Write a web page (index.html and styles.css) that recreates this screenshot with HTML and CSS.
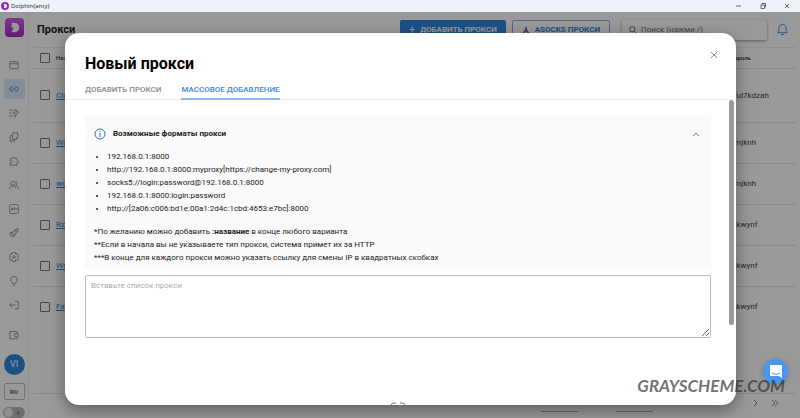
FILE: index.html
```html
<!DOCTYPE html>
<html lang="ru">
<head>
    <meta charset="UTF-8">
    <meta name="viewport" content="width=device-width, initial-scale=1.0">
    <title>Dolphin{anty}</title>
    <link rel="stylesheet" href="styles.css">
</head>
<body>
    <header class="titlebar">
        <svg class="titlebar-logo" viewBox="0 0 20 20"><circle cx="10" cy="10" r="10" fill="#9c27b0"/><path d="M7 5h3a5 5 0 0 1 0 10H7l2-5z" fill="#fff"/></svg>
        <span class="titlebar-name">Dolphin{anty}</span>
        <div class="window-controls">
            <button type="button" aria-label="Свернуть"><svg viewBox="0 0 8 8"><path d="M1 4h5"/></svg></button>
            <button type="button" aria-label="Развернуть"><svg viewBox="0 0 8 8"><path d="M2 3h3.500v3.500H2zM3 3V1.500h3.500V5H5.500"/></svg></button>
            <button type="button" aria-label="Закрыть окно"><svg viewBox="0 0 8 8"><path d="M2 2l4 4M6 2L2 6"/></svg></button>
        </div>
    </header>

    <div class="app">
        <nav class="sidebar">
            <a class="logo" href="#" aria-label="Dolphin"><svg viewBox="0 0 20 20"><path d="M7 5h2c4 0 6 2 6 5s-2 5-6 5H7c0-2 2-3 2-4 0-1-2-1-3-2 2 0 1-2 1-4z" fill="#fff"/></svg></a>
            <a class="nav-item" href="#" aria-label="Профили"><svg viewBox="0 0 24 24"><rect x="2" y="4" width="20" height="17" rx="2"/><path d="M2 9h20"/></svg></a>
            <a class="nav-item active" href="#" aria-label="Прокси"><svg viewBox="0 0 24 24"><path d="M10 17H7a5 5 0 0 1 0-10h3M14 7h3a5 5 0 0 1 0 10h-3M8 12h8"/></svg></a>
            <a class="nav-item" href="#" aria-label="Автоматизация"><svg viewBox="0 0 24 24"><path d="M17 2l-7 10h5l-1 10 9-13h-6V2M1 5h9M1 12h5M1 19h9"/></svg></a>
            <a class="nav-item" href="#" aria-label="Куки"><svg viewBox="0 0 24 24"><path d="M9 2h12v12l-4 4H9zM9 7L3 9v13h10v-4M17 18v-4h4"/></svg></a>
            <a class="nav-item" href="#" aria-label="Расширения"><svg viewBox="0 0 24 24"><path d="M3 6h6c-1-5 6-5 5 0h5v5c5-1 5 6 0 5v6H3v-6c5 1 5-6 0-5z"/></svg></a>
            <a class="nav-item" href="#" aria-label="Пользователи"><svg viewBox="0 0 24 24"><circle cx="9" cy="8" r="5"/><path d="M1 21c1-9 15-9 16 0M15 3c6 0 6 8 1 10 4 0 6 3 7 8"/></svg></a>
            <a class="nav-item" href="#" aria-label="API"><svg viewBox="0 0 24 24"><rect x="1" y="1" width="22" height="22" rx="5"/><path d="M5 15l2-6 2 6M6 13h2M12 15V9h2q2 2 0 3h-2M19 9v6"/></svg></a>
            <a class="nav-item" href="#" aria-label="Сценарии"><svg viewBox="0 0 24 24"><path d="M8 13C11 5 15 2 22 2c0 7-3 11-11 14zM9 10H5l-3 5 5-1M14 15v4l-5 3 1-5M3 21l4-4"/><circle cx="16" cy="8" r="2"/></svg></a>
            <a class="nav-item" href="#" aria-label="Настройки"><svg viewBox="0 0 24 24"><path d="M9 1h6l1 4 4-1 3 5-3 3 3 3-3 5-4-1-1 4H9l-1-4-4 1-3-5 3-3-3-3 3-5 4 1z"/><circle cx="12" cy="12" r="3"/></svg></a>
            <a class="nav-item" href="#" aria-label="Подсказки"><svg viewBox="0 0 24 24"><path d="M9 18c0-3-5-4-5-9a8 8 0 0 1 16 0c0 5-5 6-5 9zM9 22h6"/></svg></a>
            <a class="nav-item" href="#" aria-label="Выйти"><svg viewBox="0 0 24 24"><path d="M14 3h8v18h-8M16 12H2M7 7l-5 5 5 5"/></svg></a>
            <a class="nav-item wallet" href="#" aria-label="Баланс"><svg viewBox="0 0 24 24"><path d="M20 8V4H2v17h18v-4M14 9h8v7h-8q-4-3 0-7z"/><path d="M16 12h1"/></svg></a>
            <a class="avatar" href="#">VI</a>
            <button class="lang" type="button">RU</button>
            <label class="theme"><input type="checkbox" aria-label="Тёмная тема"><span class="knob"></span><svg viewBox="0 0 12 12"><circle cx="6" cy="6" r="2"/><path d="M6 1v10M1 6h10M3 3l6 6M9 3L3 9"/></svg></label>
        </nav>

        <main class="page">
            <div class="toolbar">
                <h1 class="page-title">Прокси</h1>
                <button class="btn btn-primary" type="button"><span class="plus">+</span>Добавить прокси</button>
                <button class="btn btn-outline" type="button"><svg viewBox="0 0 10 10"><path d="M5 1l1 4 3 4-4-2-4 2 3-4z"/></svg>Asocks прокси</button>
                <label class="search"><svg viewBox="0 0 12 12"><circle cx="5" cy="5" r="4"/><path d="M8 8l3 3"/></svg><input type="search" placeholder="Поиск (нажми /)" aria-label="Поиск"></label>
                <button class="bell" type="button" aria-label="Уведомления"><svg viewBox="0 0 12 14"><path d="M1 10.500c1-1 1-2 1-4.500 0-6 8-6 8 0 0 2.500 0 3.500 1 4.500zM4.500 12.500h3"/></svg></button>
            </div>
            <table class="proxies">
                <thead>
                    <tr><th class="check"><input type="checkbox" aria-label="Выбрать все"></th><th>Название</th><th class="login">Пароль</th></tr>
                </thead>
                <tbody>
                    <tr class="tall"><td class="check"><input type="checkbox" aria-label="Clu"></td><td><a href="#">Clu</a></td><td class="login">zful7kdzah</td></tr>
                    <tr><td class="check"><input type="checkbox" aria-label="Wa"></td><td><a href="#">Wa</a></td><td class="login">amjknh</td></tr>
                    <tr><td class="check"><input type="checkbox" aria-label="wc"></td><td><a href="#">wc</a></td><td class="login">amjknh</td></tr>
                    <tr><td class="check"><input type="checkbox" aria-label="Rz"></td><td><a href="#">Rz</a></td><td class="login">lqkwynf</td></tr>
                    <tr><td class="check"><input type="checkbox" aria-label="Wa 2"></td><td><a href="#">Wa</a></td><td class="login">lqkwynf</td></tr>
                    <tr><td class="check"><input type="checkbox" aria-label="Fa"></td><td><a href="#">Fa</a></td><td class="login">lqkwynf</td></tr>
                </tbody>
            </table>
            <footer class="pagination">
                <span class="page-field"></span>
                <span class="page-field"></span>
                <button type="button" aria-label="Следующая"><svg viewBox="0 0 8 8"><path d="M3 1l3 3-3 3"/></svg></button>
                <button type="button" aria-label="Последняя"><svg viewBox="0 0 8 8"><path d="M1 1l3 3-3 3M4 1l3 3-3 3"/></svg></button>
            </footer>
        </main>

        <div class="overlay">
            <section class="modal" role="dialog" aria-labelledby="modalTitle">
                <div class="modal-header">
                    <h2 class="modal-title" id="modalTitle">Новый прокси</h2>
                    <button class="modal-close" type="button" aria-label="Закрыть"><svg viewBox="0 0 8 8"><path d="M1 1l6 6M7 1L1 7"/></svg></button>
                </div>
                <div class="tabs" role="tablist">
                    <button class="tab" type="button" role="tab">Добавить прокси</button>
                    <button class="tab selected" type="button" role="tab" aria-selected="true">Массовое добавление</button>
                </div>
                <div class="modal-body">
                    <div class="modal-content">
                        <div class="formats">
                            <div class="formats-header">
                                <svg class="info" viewBox="0 0 12 12"><circle cx="6" cy="6" r="5"/><path d="M6 5v4M6 3v1"/></svg>
                                <h3>Возможные форматы прокси</h3>
                                <button type="button" aria-label="Скрыть"><svg viewBox="0 0 8 8"><path d="M1 6l3-3 3 3"/></svg></button>
                            </div>
                            <ul>
                                <li>192.168.0.1:8000</li>
                                <li>http://192.168.0.1:8000:myproxy[https://change-my-proxy.com]</li>
                                <li>socks5://login:password@192.168.0.1:8000</li>
                                <li>192.168.0.1:8000:login:password</li>
                                <li>http://[2a06:c006:bd1e:00a1:2d4c:1cbd:4653:e7bc]:8000</li>
                            </ul>
                            <p>*По желанию можно добавить <b>:название</b> в конце любого варианта</p>
                            <p>**Если в начала вы не указываете тип прокси, система примет их за HTTP</p>
                            <p>***В конце для каждого прокси можно указать ссылку для смены IP в квадратных скобках</p>
                        </div>
                        <textarea class="proxy-list" placeholder="Вставьте список прокси" aria-label="Список прокси"></textarea>
                        <svg class="empty-icon" viewBox="0 0 16 16"><path d="M1 8V4q0-3 3-3h2M15 8V4q0-3-3-3h-2"/></svg>
                    </div>
                    <div class="scroll-track"><div class="scroll-thumb"></div></div>
                </div>
            </section>
        </div>

        <button class="chat" type="button" aria-label="Чат"><svg viewBox="0 0 12 13"><path d="M1 0h10q1 0 1 1v12l-3-2H1q-1 0-1-1V1q0-1 1-1z" fill="#fff"/><path d="M2 8q4 3 8 0" fill="none" stroke="#4796f2"/></svg></button>
        <div class="watermark">GRAYSCHEME.COM</div>
    </div>
</body>
</html>
```
FILE: styles.css
```css
* {
    box-sizing: border-box;
}
body {
    display: flex;
    flex-direction: column;
    height: 100vh;
    margin: 0;
    overflow: hidden;
    font-family: Roboto, sans-serif;
    font-size: 8px;
    color: #222;
    background-color: white;
}
h1, h2, h3, p, ul {
    margin: 0;
}
button {
    display: flex;
    align-items: center;
    justify-content: center;
    padding: 0;
    border: none;
    background: none;
    font: inherit;
    color: inherit;
    cursor: pointer;
}
svg {
    flex: none;
    fill: none;
    stroke: currentColor;
}
input[type="checkbox"] {
    appearance: none;
    display: block;
    width: 10px;
    height: 10px;
    margin: 0;
    border: 1px solid #777;
    border-radius: 1px;
}

/* Window title bar */
.titlebar {
    display: flex;
    align-items: center;
    gap: 2px;
    height: 12px;
    padding: 0 9px 0 1px;
    background-color: #f0f2f9;
    font-family: "Open Sans", sans-serif;
    font-size: 6px;
}
.titlebar-logo {
    width: 8px;
    height: 8px;
    stroke: none;
}
.window-controls {
    display: flex;
    gap: 16px;
    margin-left: auto;
    color: #666;
}
.window-controls svg {
    width: 8px;
    height: 8px;
}
.app {
    position: relative;
    display: flex;
    flex: 1;
    min-height: 0;
}

/* Sidebar */
.sidebar {
    display: flex;
    flex-direction: column;
    align-items: center;
    width: 29px;
    padding-top: 6px;
    border-right: 1px solid #eee;
    color: #888;
}
.logo {
    display: flex;
    width: 19px;
    height: 19px;
    margin-bottom: 18px;
    border-radius: 4px;
    background-image: linear-gradient(#d65cf0, #a02cc4);
}
.logo svg {
    stroke: none;
}
.nav-item {
    display: flex;
    align-items: center;
    justify-content: center;
    width: 21px;
    height: 20px;
    margin-bottom: 4px;
    border-radius: 2px;
    color: inherit;
}
.nav-item svg {
    width: 10px;
    height: 10px;
    stroke-width: 2;
}
.nav-item.active {
    background-color: #dcebfb;
    color: #2f86dc;
}
.wallet {
    margin-top: 6px;
}
.avatar {
    width: 21px;
    height: 21px;
    margin-top: 5px;
    border-radius: 50%;
    background-color: #2f88e0;
    color: white;
    font-size: 9px;
    line-height: 21px;
    text-align: center;
    text-decoration: none;
}
.lang {
    width: 21px;
    height: 17px;
    margin-top: 8px;
    border: 1px solid #bbb;
    border-radius: 2px;
    color: #555;
    font-size: 6px;
    font-weight: 700;
}
.theme {
    display: flex;
    align-items: center;
    justify-content: space-between;
    width: 22px;
    height: 11px;
    margin-top: 7px;
    padding: 0 4px 0 1px;
    border-radius: 6px;
    background-color: #bbb;
}
.theme input {
    display: none;
}
.knob {
    width: 9px;
    height: 9px;
    border-radius: 50%;
    background-color: #eee;
}
.theme svg {
    width: 6px;
    height: 6px;
}

/* Proxy list page */
.page {
    display: flex;
    flex: 1;
    flex-direction: column;
    min-width: 0;
    padding: 0 4px;
}
.toolbar {
    display: flex;
    align-items: center;
    height: 36px;
    padding: 0 8px 0 4px;
    border-bottom: 1px solid #eee;
}
.page-title {
    margin-right: auto;
    font-size: 11px;
    font-weight: 700;
}
.btn {
    gap: 5px;
    height: 20px;
    padding: 0 9px;
    border-radius: 2px;
    font-weight: 700;
    text-transform: uppercase;
}
.btn-primary {
    margin-right: 6px;
    background-color: #2f88e0;
    color: white;
}
.btn .plus {
    font-size: 11px;
    font-weight: 400;
}
.btn-outline {
    margin-right: 12px;
    border: 1px solid #7ab2ee;
    color: #2f7fd8;
}
.btn-outline svg {
    width: 8px;
    height: 8px;
    fill: #7a4fd0;
    stroke: #7a4fd0;
}
.search {
    display: flex;
    align-items: center;
    gap: 4px;
    width: 145px;
    height: 20px;
    margin-right: 10px;
    padding-left: 7px;
    border-radius: 2px;
    box-shadow: 0 1px 3px rgba(0,0,0,0.4);
}
.search svg {
    width: 8px;
    height: 8px;
}
.search input {
    width: 120px;
    padding: 0;
    border: none;
    background: none;
    font: inherit;
}
.search input::placeholder {
    color: #777;
}
.bell {
    color: #2f86dc;
}
.bell svg {
    width: 11px;
    height: 13px;
}
.proxies {
    width: 100%;
    border-collapse: collapse;
    text-align: left;
}
.proxies th, .proxies td {
    height: 41px;
    padding: 0;
    border-bottom: 1px solid #e4e4e4;
}
.proxies th {
    height: 20px;
    color: #555;
    font-size: 6px;
}
.proxies td {
    color: #444;
}
.proxies .tall td {
    height: 54px;
}
.proxies tr:last-child td {
    border-bottom: none;
}
.proxies .check {
    width: 23px;
    padding-left: 7px;
}
.proxies .login {
    width: 66px;
}
.proxies a {
    color: #2f86dc;
}
.pagination {
    display: flex;
    align-items: center;
    justify-content: flex-end;
    gap: 12px;
    height: 25px;
    margin-top: auto;
    padding-right: 17px;
    padding-bottom: 6px;
    border-top: 1px solid #e4e4e4;
    color: #888;
}
.page-field {
    width: 37px;
    height: 18px;
    margin-right: 26px;
    border-bottom: 1px solid #aaa;
}
.page-field + button {
    margin-left: 60px;
}
.pagination svg {
    width: 8px;
    height: 8px;
}

/* Dialog */
.overlay {
    position: absolute;
    inset: 0;
    display: flex;
    padding: 21px 64px 13px 65px;
    background-color: rgba(0,0,0,0.4);
}
.modal {
    display: flex;
    flex: 1;
    flex-direction: column;
    min-width: 0;
    overflow: hidden;
    border-radius: 14px;
    background-color: white;
    box-shadow: 0 5px 16px rgba(0,0,0,0.4);
}
.modal-header {
    display: flex;
    align-items: flex-start;
    justify-content: space-between;
    padding: 18px 18px 0 20px;
}
.modal-title {
    font-size: 16px;
    font-weight: 700;
    line-height: 26px;
    color: black;
}
.modal-close {
    color: #888;
}
.modal-close svg {
    width: 8px;
    height: 8px;
}
.tabs {
    display: flex;
    gap: 20px;
    height: 23px;
    padding-left: 20px;
    border-bottom: 1px solid #eee;
}
.tab {
    height: 23px;
    padding-top: 3px;
    border-bottom: 2px solid transparent;
    color: #888;
    font-weight: 500;
    text-transform: uppercase;
}
.tab.selected {
    border-bottom-color: #8ab8f0;
    color: #3b87dc;
}
.modal-body {
    display: flex;
    flex: 1;
    min-height: 0;
}
.modal-content {
    display: flex;
    flex: 1;
    flex-direction: column;
    padding: 16px 18px 0 20px;
}
.formats {
    padding: 11px 9px 5px;
    background-color: #fafafa;
    line-height: 13px;
}
.formats-header {
    display: flex;
    align-items: center;
    gap: 7px;
    margin-bottom: 10px;
}
.formats-header h3 {
    margin-right: auto;
    font-size: 8px;
    font-weight: 700;
}
.formats-header button {
    width: 12px;
    color: #888;
}
.formats-header button svg {
    width: 8px;
    height: 8px;
}
.info {
    width: 12px;
    height: 12px;
    color: #3569bd;
}
.formats ul {
    margin-bottom: 10px;
    padding-left: 13px;
}
.proxy-list {
    display: block;
    flex: none;
    width: 100%;
    height: 63px;
    margin: 6px 0 64px;
    padding: 5px;
    border: 1px solid #bbb;
    border-radius: 2px;
    font: inherit;
    resize: vertical;
}
.proxy-list::placeholder {
    color: #aaa;
}
.empty-icon {
    align-self: center;
    width: 16px;
    height: 16px;
    color: #777;
}
.scroll-track {
    width: 7px;
}
.scroll-thumb {
    width: 5px;
    height: 225px;
    border-radius: 3px;
    background-color: #999;
}

/* Floating items */
.chat {
    position: absolute;
    right: 12px;
    bottom: 34px;
    width: 25px;
    height: 25px;
    border-radius: 50%;
    background-color: #4796f2;
    box-shadow: 0 1px 6px rgba(0,0,0,0.2);
}
.chat svg {
    width: 12px;
    height: 13px;
    stroke: none;
}
.watermark {
    position: absolute;
    right: 15px;
    bottom: 20px;
    color: rgba(50,50,50,0.7);
    font-family: Lato, sans-serif;
    font-size: 17px;
    font-style: italic;
    font-weight: 700;
    line-height: 24px;
}
```
